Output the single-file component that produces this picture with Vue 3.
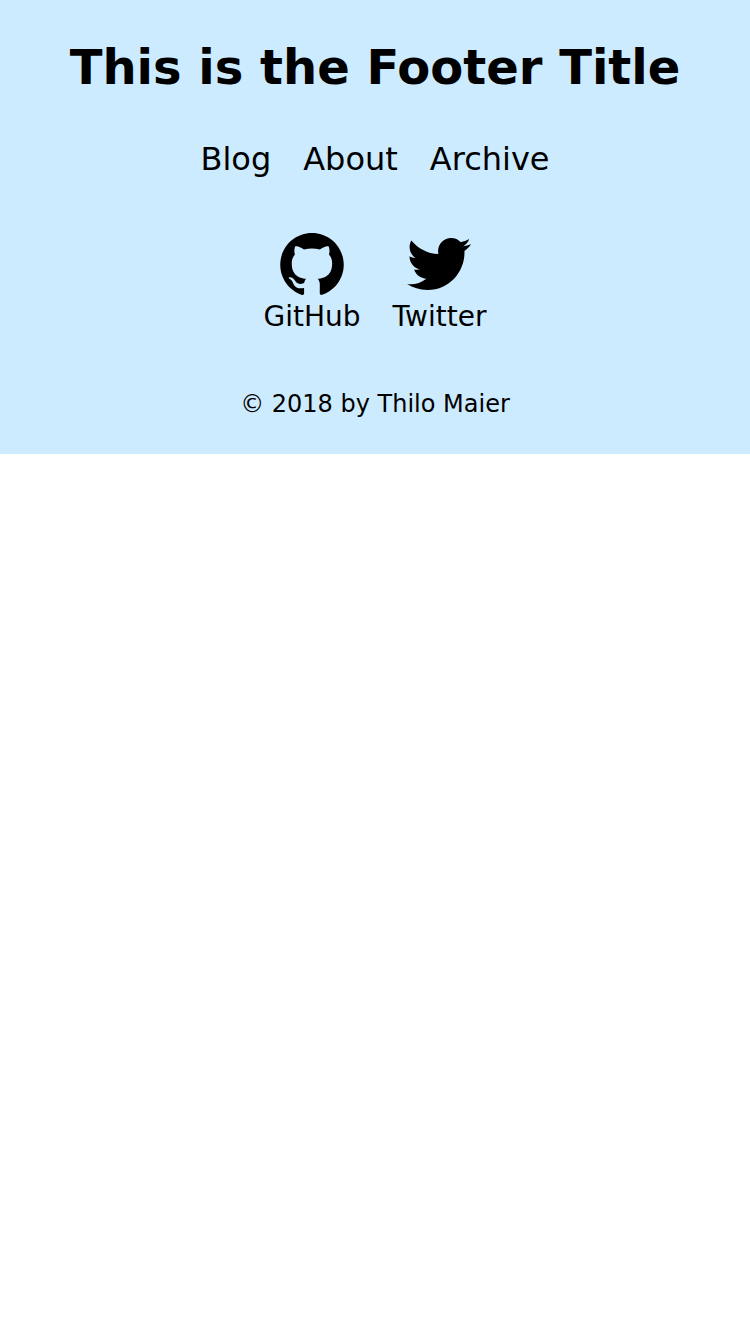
<script setup>
const links = ['Blog', 'About', 'Archive']
const socials = [
  {
    name: 'GitHub',
    viewBox: '-0.1 0 24.2 24',
    path: 'M12 .297c-6.63 0-12 5.373-12 12 0 5.303 3.438 9.8 8.205 11.385.6.113.82-.258.82-.577 0-.285-.01-1.04-.015-2.04-3.338.724-4.042-1.61-4.042-1.61C4.422 18.07 3.633 17.7 3.633 17.7c-1.087-.744.084-.729.084-.729 1.205.084 1.838 1.236 1.838 1.236 1.07 1.835 2.809 1.305 3.495.998.108-.776.417-1.305.76-1.605-2.665-.3-5.466-1.332-5.466-5.93 0-1.31.465-2.38 1.235-3.22-.135-.303-.54-1.523.105-3.176 0 0 1.005-.322 3.3 1.23.96-.267 1.98-.399 3-.405 1.02.006 2.04.138 3 .405 2.28-1.552 3.285-1.23 3.285-1.23.645 1.653.24 2.873.12 3.176.765.84 1.23 1.91 1.23 3.22 0 4.61-2.805 5.625-5.475 5.92.42.36.81 1.096.81 2.22 0 1.606-.015 2.896-.015 3.286 0 .315.21.69.825.57C20.565 22.092 24 17.592 24 12.297c0-6.627-5.373-12-12-12'
  },
  {
    name: 'Twitter',
    viewBox: '0 0 24 24',
    path: 'M23.954 4.569c-.885.389-1.83.654-2.825.775 1.014-.611 1.794-1.574 2.163-2.723-.951.555-2.005.959-3.127 1.184-.896-.959-2.173-1.559-3.591-1.559-2.717 0-4.92 2.203-4.92 4.917 0 .39.045.765.127 1.124C7.691 8.094 4.066 6.13 1.64 3.161c-.427.722-.666 1.561-.666 2.475 0 1.71.87 3.213 2.188 4.096-.807-.026-1.566-.248-2.228-.616v.061c0 2.385 1.693 4.374 3.946 4.827-.413.111-.849.171-1.296.171-.314 0-.615-.03-.916-.086.631 1.953 2.445 3.377 4.604 3.417-1.68 1.319-3.809 2.105-6.102 2.105-.39 0-.779-.023-1.17-.067 2.189 1.394 4.768 2.209 7.557 2.209 9.054 0 13.999-7.496 13.999-13.986 0-.209 0-.42-.015-.63.961-.689 1.8-1.56 2.46-2.548l-.047-.02z'
  }
]
</script>

<template>
  <footer class="footer">
    <h1 class="title">This is the Footer Title</h1>
    <nav class="links">
      <a v-for="link in links" :key="link">{{ link }}</a>
    </nav>
    <div class="socials">
      <a v-for="item in socials" :key="item.name" class="social">
        <svg :viewBox="item.viewBox" aria-hidden="true"><path :d="item.path" /></svg>
        <span>{{ item.name }}</span>
      </a>
    </div>
    <p class="copyright">© 2018 by Thilo Maier</p>
  </footer>
</template>

<style scoped>
.footer {
  box-sizing: border-box;
  height: 454px;
  padding-top: 31px;
  background: #cdebff;
  color: #000;
  font-family: "DejaVu Sans", sans-serif;
  text-align: center;
}
.title {
  margin: 0;
  font-size: 48px;
  line-height: 72px;
}
.links {
  display: flex;
  justify-content: center;
  gap: 32px;
  margin-top: 32px;
  font-size: 32px;
  line-height: 48px;
}
.socials {
  display: flex;
  justify-content: center;
  gap: 32px;
  margin-top: 49px;
}
.social {
  display: flex;
  flex-direction: column;
  align-items: center;
  font-size: 28px;
  line-height: 42px;
}
.social svg {
  width: 64px;
  height: 64px;
}
.social:last-child svg {
  margin-right: 1.5px;
}
.copyright {
  margin: 48px 0 0;
  font-size: 24px;
  line-height: 36px;
}
</style>
